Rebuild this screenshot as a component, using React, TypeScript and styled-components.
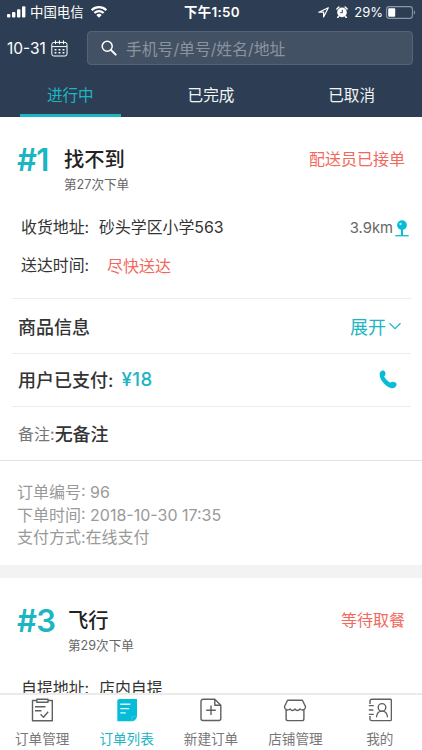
import React from "react";
import styled, { createGlobalStyle } from "styled-components";

const Global = createGlobalStyle`
  * { box-sizing: border-box; }
  html, body { margin: 0; padding: 0; background: #fff; overflow: hidden; }
  body { font-family: Inter, "Noto Sans CJK SC", sans-serif; color: #333; }
`;

const teal = "#1cb6c2";
const cyan = "#06bcd9";
const red = "#f4675c";

const Screen = styled.div`
  width: 422px;
  height: 750px;
  display: flex;
  flex-direction: column;
  overflow: hidden;
  background: #fff;
  white-space: nowrap;
`;

const Header = styled.header`
  flex: 0 0 117px;
  background: #2d3e54;
  color: #fff;
`;

const StatusBar = styled.div`
  height: 24px;
  display: grid;
  grid-template-columns: 1fr auto 1fr;
  align-items: center;
  padding: 0 6px 0 7px;
  font-size: 13px;
  line-height: 24px;
`;

const Carrier = styled.div`
  display: flex;
  align-items: center;
  gap: 4px;
  font-size: 13.4px;

  svg:last-child { margin-left: 3px; }
`;

const Clock = styled.div`
  padding-left: 1px;
  font-size: 13.4px;
  font-weight: 600;
  letter-spacing: 0.3px;
`;

const StatusRight = styled.div`
  display: flex;
  align-items: center;
  justify-content: flex-end;
  font-size: 13px;
`;

const Percent = styled.span`
  margin: 0 3px 0 6px;
`;

const AlarmSlot = styled.span`
  display: flex;
  margin-left: 7px;
`;

const SearchRow = styled.div`
  height: 48px;
  display: flex;
  align-items: center;
  padding: 0 9px 0 7px;
`;

const DateButton = styled.div`
  width: 80px;
  display: flex;
  align-items: center;
  gap: 5px;
  font-size: 15.5px;
`;

const SearchBox = styled.div`
  flex: 1;
  height: 34px;
  display: flex;
  align-items: center;
  padding-left: 13px;
  gap: 9px;
  border: 1px solid #566377;
  border-radius: 4px;
  background: #435165;
  color: #8c939d;
  font-size: 15.8px;
`;

const Tabs = styled.nav`
  height: 45px;
  display: grid;
  grid-template-columns: repeat(3, 1fr);
`;

const Tab = styled.div<{ $active?: boolean }>`
  display: flex;
  justify-content: center;
  height: 45px;
  margin: 0 20px;
  font-size: 15.6px;
  line-height: 47px;
  color: ${(p) => (p.$active ? teal : "#f1f3f5")};
  border-bottom: 3px solid ${(p) => (p.$active ? teal : "transparent")};
`;

const Content = styled.main`
  flex: 1;
  min-height: 0;
  overflow: hidden;
`;

const OrderHead = styled.div`
  height: 91px;
  display: flex;
  align-items: flex-start;
  padding: 27px 17px 0;
`;

const Serial = styled.div<{ $width: number }>`
  width: ${(p) => p.$width}px;
  font-size: 31px;
  line-height: 31px;
  font-weight: 600;
  letter-spacing: -0.8px;
  color: ${teal};
`;

const Customer = styled.div`
  flex: 1;
`;

const Name = styled.div`
  font-size: 20.3px;
  line-height: 31px;
  font-weight: 500;
  color: #222;
`;

const OrderCount = styled.div`
  font-size: 12.6px;
  line-height: 20px;
  color: #666;
`;

const OrderStatus = styled.div`
  font-size: 16px;
  line-height: 30px;
  color: ${red};
`;

const Fields = styled.div`
  height: 90px;
`;

const Field = styled.div`
  height: 38px;
  display: flex;
  align-items: center;
  padding: 2px 13px 0 21px;
  font-size: 15.9px;
  line-height: 22px;
  color: #333;
`;

const Label = styled.span`
  width: 78px;
`;

const Urgent = styled.span`
  margin-left: 8px;
  font-size: 16px;
  color: ${red};
`;

const Distance = styled.span`
  display: flex;
  align-items: center;
  gap: 2px;
  margin-left: auto;
  font-size: 14.8px;
  color: #666;
`;

const Row = styled.div<{ $height: number; $lift?: number }>`
  height: ${(p) => p.$height}px;
  display: flex;
  align-items: center;
  margin: 0 11px 0 12px;
  padding: 0 9px ${(p) => p.$lift ?? 0}px 6px;
  border-top: 1px solid #ededed;
  font-size: 18px;
  font-weight: 500;
  color: #333;
`;

const Expand = styled.span`
  display: flex;
  align-items: center;
  gap: 3px;
  margin-right: 1px;
  margin-left: auto;
  font-weight: 400;
  color: ${teal};
`;

const Price = styled.span`
  margin-left: 8px;
  font-size: 18.6px;
  letter-spacing: 0.5px;
  color: ${teal};
`;

const Call = styled.span`
  display: flex;
  margin: 0 5px 0 auto;
`;

const RemarkLabel = styled.span`
  font-size: 16px;
  font-weight: 400;
  color: #777;
`;

const Meta = styled.div`
  height: 105px;
  padding: 20px 17px 0;
  border-top: 1px solid #e2e2e2;
  font-size: 16px;
  line-height: 22.5px;
  color: #999;
`;

const Gap = styled.div`
  height: 13px;
  background: #f3f3f3;
`;

const BottomBar = styled.nav`
  flex: 0 0 57px;
  display: grid;
  grid-template-columns: repeat(5, 1fr);
  border-top: 2px solid #ebebeb;
  background: #fff;
`;

const BottomItem = styled.div<{ $active?: boolean }>`
  display: flex;
  flex-direction: column;
  align-items: center;
  padding-top: 3px;
  font-size: 13.6px;
  line-height: 22px;
  color: ${(p) => (p.$active ? teal : "#777")};
  svg { display: block; margin-bottom: 6px; }
`;

const SignalIcon = () => (
  <svg width="19" height="12" viewBox="0 0 19 12" fill="#fff">
    <rect x="0" y="8" width="3.4" height="3.5" rx="1" />
    <rect x="5" y="6" width="3.4" height="5.5" rx="1" />
    <rect x="10" y="3.3" width="3.4" height="8.2" rx="1" />
    <rect x="15" y="0.3" width="3.4" height="11.2" rx="1" />
  </svg>
);

const WifiIcon = () => (
  <svg width="16" height="12" viewBox="0 0 16 12" fill="none" stroke="#fff" strokeWidth="2.2">
    <path d="M.7 4.2a10.4 10.4 0 0 1 14.6 0" />
    <path d="M3.4 7a6.5 6.5 0 0 1 9.2 0" />
    <path d="M8 11.8 5.3 9.1a3.8 3.8 0 0 1 5.4 0Z" fill="#fff" stroke="none" />
  </svg>
);

const LocationIcon = () => (
  <svg width="11" height="11" viewBox="0 0 11 11" fill="none" stroke="#fff" strokeWidth="1.2" strokeLinejoin="round">
    <path d="M10.3.8.8 5.2h4.8V10Z" />
  </svg>
);

const AlarmIcon = () => (
  <svg width="12" height="12" viewBox="0 0 12 12" fill="none">
    <circle cx="6" cy="6.4" r="4.8" fill="#fff" />
    <path d="m.9 3 2-2M11.1 3l-2-2M2.7 10.3l-1 1.2M9.3 10.3l1 1.2" stroke="#fff" strokeWidth="1.5" strokeLinecap="round" />
    <path d="M6.3 3.8v2.9H4.2" stroke="#2d3e54" strokeWidth="1" />
  </svg>
);

const BatteryIcon = () => (
  <svg width="30" height="13" viewBox="0 0 30 13">
    <rect x=".6" y=".6" width="25.8" height="11.8" rx="2.6" fill="none" stroke="#8b96a4" strokeWidth="1.1" />
    <rect x="2.2" y="2.2" width="7" height="8.6" rx="1" fill="#fff" />
    <path d="M27.8 4.3c1.8.7 1.8 3.7 0 4.4Z" fill="#8b96a4" />
  </svg>
);

const CalendarIcon = () => (
  <svg width="17" height="17" viewBox="0 0 17 17" fill="none" stroke="#fff">
    <rect x=".8" y="2.4" width="15.2" height="13.6" rx="2" />
    <path d="M.8 6.6H16M4.5.4v3.8M8.5.4v3.8M12.5.4v3.8" />
    <path d="M3.6 9.7h10M3.6 12.8h10" strokeWidth="1.4" strokeDasharray="1.8 2.2" />
  </svg>
);

const SearchIcon = () => (
  <svg width="16" height="16" viewBox="0 0 16 16" fill="none" stroke="#fff" strokeWidth="1.5" strokeLinecap="round">
    <circle cx="6.2" cy="6.2" r="5" />
    <path d="m10 10 4.7 4.7" strokeWidth="1.9" />
  </svg>
);

const PinIcon = () => (
  <svg width="14" height="17" viewBox="0 0 14 17">
    <circle cx="7" cy="5.1" r="4.9" fill={cyan} />
    <path d="M.3 15.7h13.4" stroke={cyan} strokeWidth="1.3" />
    <path d="M7 9v6.5" stroke={cyan} strokeWidth="2" />
    <circle cx="5.5" cy="3.9" r="1.1" fill="#d7f6fa" />
  </svg>
);

const ChevronIcon = () => (
  <svg width="12" height="8" viewBox="0 0 12 8" fill="none" stroke={teal} strokeWidth="1.2">
    <path d="m.5 1.2 5.5 5.4 5.5-5.4" />
  </svg>
);

const PhoneIcon = () => (
  <svg width="18" height="19" viewBox="0 0 18 19" fill={cyan}>
    <path d="M.6 4C.8 1.8 2.500.4 4.200.6c1.400.2 2.300 1.400 2.300 3 0 1.200-.3 1.800-.9 2.400-.5.6-.3 1.100.9 2.600 1.400 1.700 2.800 3 4 3.700.7.4 1.100.3 1.700-.1 1-.7 2.300-.6 3.700.1 1.300.6 1.900 1.500 1.700 2.500-.4 2-2.300 3.700-4.700 3.500C8.100 17.800.100 10 .6 4Z" />
  </svg>
);

const iconProps = {
  width: 24,
  height: 24,
  viewBox: "0 0 24 24",
  fill: "none",
  stroke: "#606060",
  strokeWidth: 1.4,
  strokeLinejoin: "round" as const,
};

const ClipboardIcon = () => (
  <svg {...iconProps}>
    <path d="M6.8 2.5H2.5v20.300h19.800V2.500H18" />
    <path d="M6.8 1.3H18v2.900H6.800ZM5 8.700h10.500M5 12.800h6.500M10.600 16.300l2.900 3 4.700-5.600" />
  </svg>
);

const ListIcon = () => (
  <svg {...iconProps} stroke="none">
    <path d="M4.5 1h17.500v16.500c0 3.500-2.500 5.800-6 5.800H2.300V3.200C2.300 1.900 3.200 1 4.500 1Z" fill={cyan} />
    <path d="M16.8 23c.5-2 .4-3.500-.2-4.600 2 .5 3.700.2 5.200-1" fill="none" stroke="#6bdbea" strokeWidth=".4" />
    <path d="M5.3 6.3h10M5.3 10.6h9M5.3 14.9h5.5" stroke="#e4fafc" strokeWidth="1.4" />
  </svg>
);

const NewIcon = () => (
  <svg {...iconProps}>
    <path d="M4 1.3h11.800l6 6v13.200a2 2 0 0 1-2 2H4a2 2 0 0 1-2-2V3.300a2 2 0 0 1 2-2ZM15.800 1.300v6h6M12 7.500v9.600M7.200 12.300h9.600" />
  </svg>
);

const StoreIcon = () => (
  <svg {...iconProps}>
    <path d="M4.6 2.3h14.800l3.200 6.500c-.3 2.900-3 4.200-5.600 2.200-1.600 2-3.500 2-5 0-1.500 2-3.400 2-5 0-2.600 2-5.300.7-5.600-2.200ZM3.100 12v8.700c0 1.200.7 1.900 1.900 1.900h14c1.200 0 1.900-.7 1.900-1.900V12" />
  </svg>
);

const ContactIcon = () => (
  <svg {...iconProps}>
    <path d="M2 6V3c0-1 .7-1.700 1.700-1.700h18.500c.7 0 1.200.5 1.200 1.200v18.900c0 .7-.5 1.200-1.200 1.200H3.700c-1 0-1.700-.7-1.700-1.700v-3" />
    <path d="M.8 7.600h5M.8 12h4.500M.8 16.400h5" />
    <circle cx="14" cy="9.4" r="3.8" />
    <path d="M8.5 19.3c.2-4 2.500-6.200 5.500-6.200s5.300 2.200 5.500 6.200" />
  </svg>
);

type HeadProps = {
  serial: string;
  serialWidth: number;
  name: string;
  count: string;
  status: string;
};

const OrderHeader = ({ serial, serialWidth, name, count, status }: HeadProps) => (
  <OrderHead>
    <Serial $width={serialWidth}>{serial}</Serial>
    <Customer>
      <Name>{name}</Name>
      <OrderCount>{count}</OrderCount>
    </Customer>
    <OrderStatus>{status}</OrderStatus>
  </OrderHead>
);

const bottomItems = [
  { label: "订单管理", Icon: ClipboardIcon },
  { label: "订单列表", Icon: ListIcon, active: true },
  { label: "新建订单", Icon: NewIcon },
  { label: "店铺管理", Icon: StoreIcon },
  { label: "我的", Icon: ContactIcon },
];

export default function App() {
  return (
    <Screen>
      <Global />
      <Header>
        <StatusBar>
          <Carrier>
            <SignalIcon />
            <span>中国电信</span>
            <WifiIcon />
          </Carrier>
          <Clock>下午1:50</Clock>
          <StatusRight>
            <LocationIcon />
            <AlarmSlot><AlarmIcon /></AlarmSlot>
            <Percent>29%</Percent>
            <BatteryIcon />
          </StatusRight>
        </StatusBar>
        <SearchRow>
          <DateButton>
            <span>10-31</span>
            <CalendarIcon />
          </DateButton>
          <SearchBox>
            <SearchIcon />
            <span>手机号/单号/姓名/地址</span>
          </SearchBox>
        </SearchRow>
        <Tabs>
          <Tab $active>进行中</Tab>
          <Tab>已完成</Tab>
          <Tab>已取消</Tab>
        </Tabs>
      </Header>
      <Content>
        <OrderHeader serial="#1" serialWidth={47} name="找不到" count="第27次下单" status="配送员已接单" />
        <Fields>
          <Field>
            <Label>收货地址:</Label>
            <span>砂头学区小学563</span>
            <Distance>3.9km<PinIcon /></Distance>
          </Field>
          <Field>
            <Label>送达时间:</Label>
            <Urgent>尽快送达</Urgent>
          </Field>
        </Fields>
        <Row $height={55} $lift={1}>
          商品信息
          <Expand>展开<ChevronIcon /></Expand>
        </Row>
        <Row $height={53} $lift={2}>
          用户已支付:
          <Price>¥18</Price>
          <Call><PhoneIcon /></Call>
        </Row>
        <Row $height={54} $lift={2}>
          <RemarkLabel>备注:</RemarkLabel>无备注
        </Row>
        <Meta>
          <div>订单编号: 96</div>
          <div>下单时间: 2018-10-30 17:35</div>
          <div>支付方式:在线支付</div>
        </Meta>
        <Gap />
        <OrderHeader serial="#3" serialWidth={51} name="飞行" count="第29次下单" status="等待取餐" />
        <Fields>
          <Field>
            <Label>自提地址:</Label>
            <span>店内自提</span>
          </Field>
        </Fields>
      </Content>
      <BottomBar>
        {bottomItems.map(({ label, Icon, active }) => (
          <BottomItem key={label} $active={active}>
            <Icon />
            {label}
          </BottomItem>
        ))}
      </BottomBar>
    </Screen>
  );
}
